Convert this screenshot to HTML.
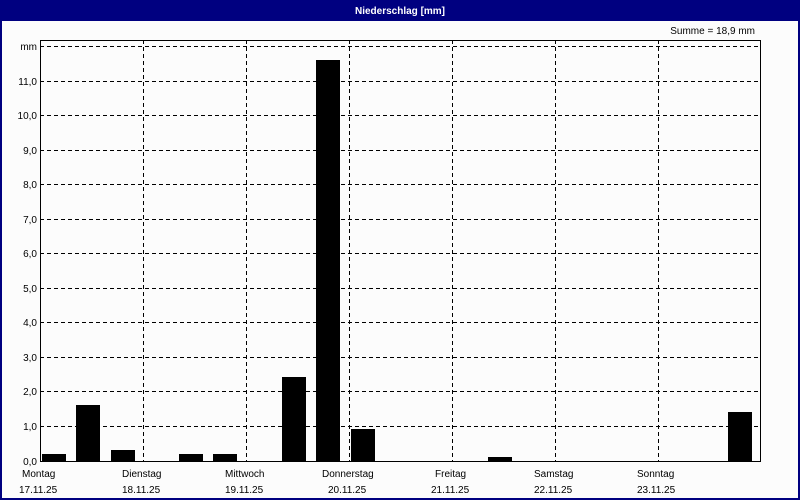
<!DOCTYPE html>
<html><head><meta charset="utf-8"><style>
body{margin:0;background:#fff}
svg{display:block}
text{font-family:"Liberation Sans",sans-serif;font-size:10px;fill:#000}
</style></head><body>
<svg width="800" height="500" viewBox="0 0 800 500">
<rect x="0" y="0" width="800" height="500" fill="#000080"/>
<rect x="2" y="21" width="796" height="477" fill="#fcfcfc"/>
<text x="400" y="14" text-anchor="middle" style="fill:#fff;font-weight:bold;font-size:10px">Niederschlag [mm]</text>
<text x="755" y="34" text-anchor="end">Summe = 18,9 mm</text>
<g stroke="#000" stroke-width="1" stroke-dasharray="4,3" shape-rendering="crispEdges">
<line x1="40" x2="761" y1="46.5" y2="46.5"/>
<line x1="40" x2="761" y1="81.5" y2="81.5"/>
<line x1="40" x2="761" y1="115.5" y2="115.5"/>
<line x1="40" x2="761" y1="150.5" y2="150.5"/>
<line x1="40" x2="761" y1="184.5" y2="184.5"/>
<line x1="40" x2="761" y1="219.5" y2="219.5"/>
<line x1="40" x2="761" y1="253.5" y2="253.5"/>
<line x1="40" x2="761" y1="288.5" y2="288.5"/>
<line x1="40" x2="761" y1="322.5" y2="322.5"/>
<line x1="40" x2="761" y1="357.5" y2="357.5"/>
<line x1="40" x2="761" y1="391.5" y2="391.5"/>
<line x1="40" x2="761" y1="426.5" y2="426.5"/>
<line x1="143.5" x2="143.5" y1="40" y2="461"/>
<line x1="246.5" x2="246.5" y1="40" y2="461"/>
<line x1="349.5" x2="349.5" y1="40" y2="461"/>
<line x1="452.5" x2="452.5" y1="40" y2="461"/>
<line x1="555.5" x2="555.5" y1="40" y2="461"/>
<line x1="658.5" x2="658.5" y1="40" y2="461"/>
</g>
<rect x="40.5" y="40.5" width="720" height="421" fill="none" stroke="#000" shape-rendering="crispEdges"/>
<g fill="#000">
<rect x="42" y="454" width="24" height="7"/>
<rect x="76" y="405" width="24" height="56"/>
<rect x="111" y="450" width="24" height="11"/>
<rect x="179" y="454" width="24" height="7"/>
<rect x="213" y="454" width="24" height="7"/>
<rect x="282" y="377" width="24" height="84"/>
<rect x="316" y="60" width="24" height="401"/>
<rect x="351" y="429" width="24" height="32"/>
<rect x="488" y="457" width="24" height="4"/>
<rect x="728" y="412" width="24" height="49"/>
</g>
<g text-anchor="end">
<text x="37" y="50">mm</text>
<text x="37" y="85">11,0</text>
<text x="37" y="119">10,0</text>
<text x="37" y="154">9,0</text>
<text x="37" y="188">8,0</text>
<text x="37" y="223">7,0</text>
<text x="37" y="257">6,0</text>
<text x="37" y="292">5,0</text>
<text x="37" y="326">4,0</text>
<text x="37" y="361">3,0</text>
<text x="37" y="395">2,0</text>
<text x="37" y="430">1,0</text>
<text x="37" y="465">0,0</text>
</g>
<text x="22" y="477">Montag</text><text x="19" y="493">17.11.25</text>
<text x="122" y="477">Dienstag</text><text x="122" y="493">18.11.25</text>
<text x="225" y="477">Mittwoch</text><text x="225" y="493">19.11.25</text>
<text x="322" y="477">Donnerstag</text><text x="328" y="493">20.11.25</text>
<text x="435" y="477">Freitag</text><text x="431" y="493">21.11.25</text>
<text x="534" y="477">Samstag</text><text x="534" y="493">22.11.25</text>
<text x="637" y="477">Sonntag</text><text x="637" y="493">23.11.25</text>
</svg>
</body></html>
